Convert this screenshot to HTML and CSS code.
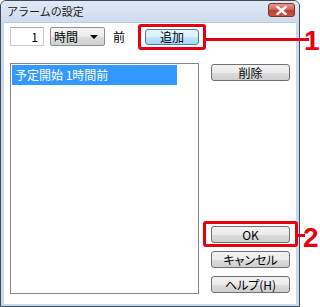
FILE: index.html
```html
<!DOCTYPE html>
<html lang="ja">
<head>
    <meta charset="UTF-8">
    <title>アラームの設定</title>
    <link rel="stylesheet" href="styles.css">
</head>
<body>
    <!-- Dialog window -->
    <div class="window">
        <div class="titlebar">
            <span class="title">アラームの設定</span>
            <button class="close-btn">
                <svg width="11" height="9" viewBox="0 0 11 9">
                    <path d="M1.5 1 L9.5 8 M9.5 1 L1.5 8" stroke="#fff" stroke-width="2.4" stroke-linecap="square"/>
                </svg>
            </button>
        </div>

        <div class="client">
            <!-- Offset row -->
            <div class="offset-row">
                <div class="textbox">1</div>
                <div class="combo">
                    <span>時間</span>
                    <span class="combo-arrow"></span>
                </div>
                <span class="label">前</span>
                <span class="callout callout-add">
                    <button class="btn btn-default">追加</button>
                    <span class="leader leader-1"></span>
                    <span class="num num-1">1</span>
                </span>
            </div>

            <!-- List and actions -->
            <div class="main-row">
                <div class="listbox">
                    <div class="list-item selected">予定開始 1時間前</div>
                </div>
                <div class="actions">
                    <button class="btn btn-delete">削除</button>
                    <div class="bottom-actions">
                        <span class="callout callout-ok">
                            <button class="btn">OK</button>
                            <span class="leader leader-2"></span>
                            <span class="num num-2">2</span>
                        </span>
                        <button class="btn">キャンセル</button>
                        <button class="btn">ヘルプ(H)</button>
                    </div>
                </div>
            </div>
        </div>
    </div>
</body>
</html>
```

FILE: styles.css
```css
body, html {
    margin: 0;
    padding: 0;
    background: #fff;
    font-family: "Noto Sans CJK JP", "Noto Sans", sans-serif;
    font-size: 12px;
    font-feature-settings: "palt";
    color: #000;
}

/* Window frame */
.window {
    width: 300px;
    height: 307px;
    box-sizing: border-box;
    border: 1px solid #3d4a5c;
    border-radius: 6px 6px 0 0;
    background: #c9d8eb;
    padding: 0 3px 3px 3px;
}

.titlebar {
    height: 21px;
    margin: 0 -3px;
    padding: 0 4px 0 6px;
    display: flex;
    align-items: center;
    justify-content: space-between;
    background: linear-gradient(#dfe8f4, #cfdcee);
    border-radius: 5px 5px 0 0;
}

.title {
    font-size: 11px;
    font-feature-settings: normal;
    color: #1a1a1a;
    line-height: 1;
}

.close-btn {
    width: 27px;
    height: 14px;
    margin-top: -3px;
    padding: 0;
    border: 1px solid #7c3028;
    border-radius: 3px;
    background: linear-gradient(#e39a90, #d06a5d 45%, #b8402f 55%, #c9584a);
    display: flex;
    align-items: center;
    justify-content: center;
}

/* Client area */
.client {
    height: 282px;
    box-sizing: border-box;
    background: #fff;
    padding: 5px 6px 0 6px;
    border-top: 1px solid #b8c8de;
}

.offset-row {
    display: flex;
    align-items: center;
    height: 19px;
    margin-top: -1px;
}

.textbox {
    width: 34px;
    height: 19px;
    box-sizing: border-box;
    border: 1px solid #c5cad2;
    border-top-color: #abadb3;
    text-align: right;
    padding-right: 5px;
    line-height: 17px;
}

.combo {
    width: 55px;
    height: 19px;
    box-sizing: border-box;
    margin-left: 6px;
    border: 1px solid #8e8f8f;
    border-radius: 2px;
    background: linear-gradient(#f4f4f4 0%, #ececec 50%, #dcdcdc 51%, #d2d2d2 100%);
    display: flex;
    align-items: center;
    justify-content: space-between;
    padding: 0 6px 0 3px;
    line-height: 1;
}

.combo-arrow {
    width: 0;
    height: 0;
    border-left: 4px solid transparent;
    border-right: 4px solid transparent;
    border-top: 4px solid #000;
}

.label {
    margin-left: 8px;
    line-height: 1;
}

/* Buttons */
.btn {
    display: block;
    width: 79px;
    height: 17px;
    padding: 0;
    border: 1px solid #707070;
    border-radius: 3px;
    background: linear-gradient(#f2f2f2 0%, #ebebeb 50%, #dddddd 51%, #cfcfcf 100%);
    font-family: inherit;
    font-size: 12px;
    font-feature-settings: "palt";
    line-height: 1;
    color: #000;
}

.btn-default {
    width: 54px;
    height: 16px;
    border-color: #3c7fb1;
    background: linear-gradient(#eaf6fd 0%, #d9f0fc 50%, #bee6fd 51%, #a7d9f5 100%);
}

/* Red callouts */
.callout {
    position: relative;
    display: block;
    border: 3px solid #e60012;
    border-radius: 3px;
}

.callout-add {
    margin: -5px 0 -5px 13px;
    padding: 2px 4px;
}

.callout-ok {
    margin: -5px -8px -4px -8px;
    padding: 2px 5px 1px 5px;
}

.leader {
    position: absolute;
    left: 100%;
    height: 3px;
    background: #e60012;
}

.leader-1 {
    top: 11px;
    margin-left: 3px;
    width: 103px;
}

.leader-2 {
    top: 10px;
    margin-left: 3px;
    width: 7px;
}

.num {
    position: absolute;
    font-family: "Liberation Sans", Arial, sans-serif;
    font-weight: bold;
    font-size: 28px;
    line-height: 1;
    color: #e60012;
}

.num-1 {
    left: 100%;
    margin-left: 101px;
    top: 0;
}

.num-2 {
    left: 100%;
    margin-left: 8px;
    top: 0;
}

/* List and actions */
.main-row {
    display: flex;
    margin-top: 17px;
}

.listbox {
    width: 190px;
    height: 231px;
    box-sizing: border-box;
    border: 1px solid #828790;
    padding: 1px;
}

.list-item {
    width: 165px;
    height: 20px;
    line-height: 20px;
    padding-left: 3px;
    box-sizing: border-box;
}

.list-item.selected {
    background: #3399ff;
    color: #fff;
}

.actions {
    width: 79px;
    margin-left: 12px;
    display: flex;
    flex-direction: column;
}

.btn-delete {
    margin-top: 1px;
}

.bottom-actions {
    margin-top: auto;
    margin-bottom: 1px;
    display: flex;
    flex-direction: column;
    gap: 8px;
}
```
